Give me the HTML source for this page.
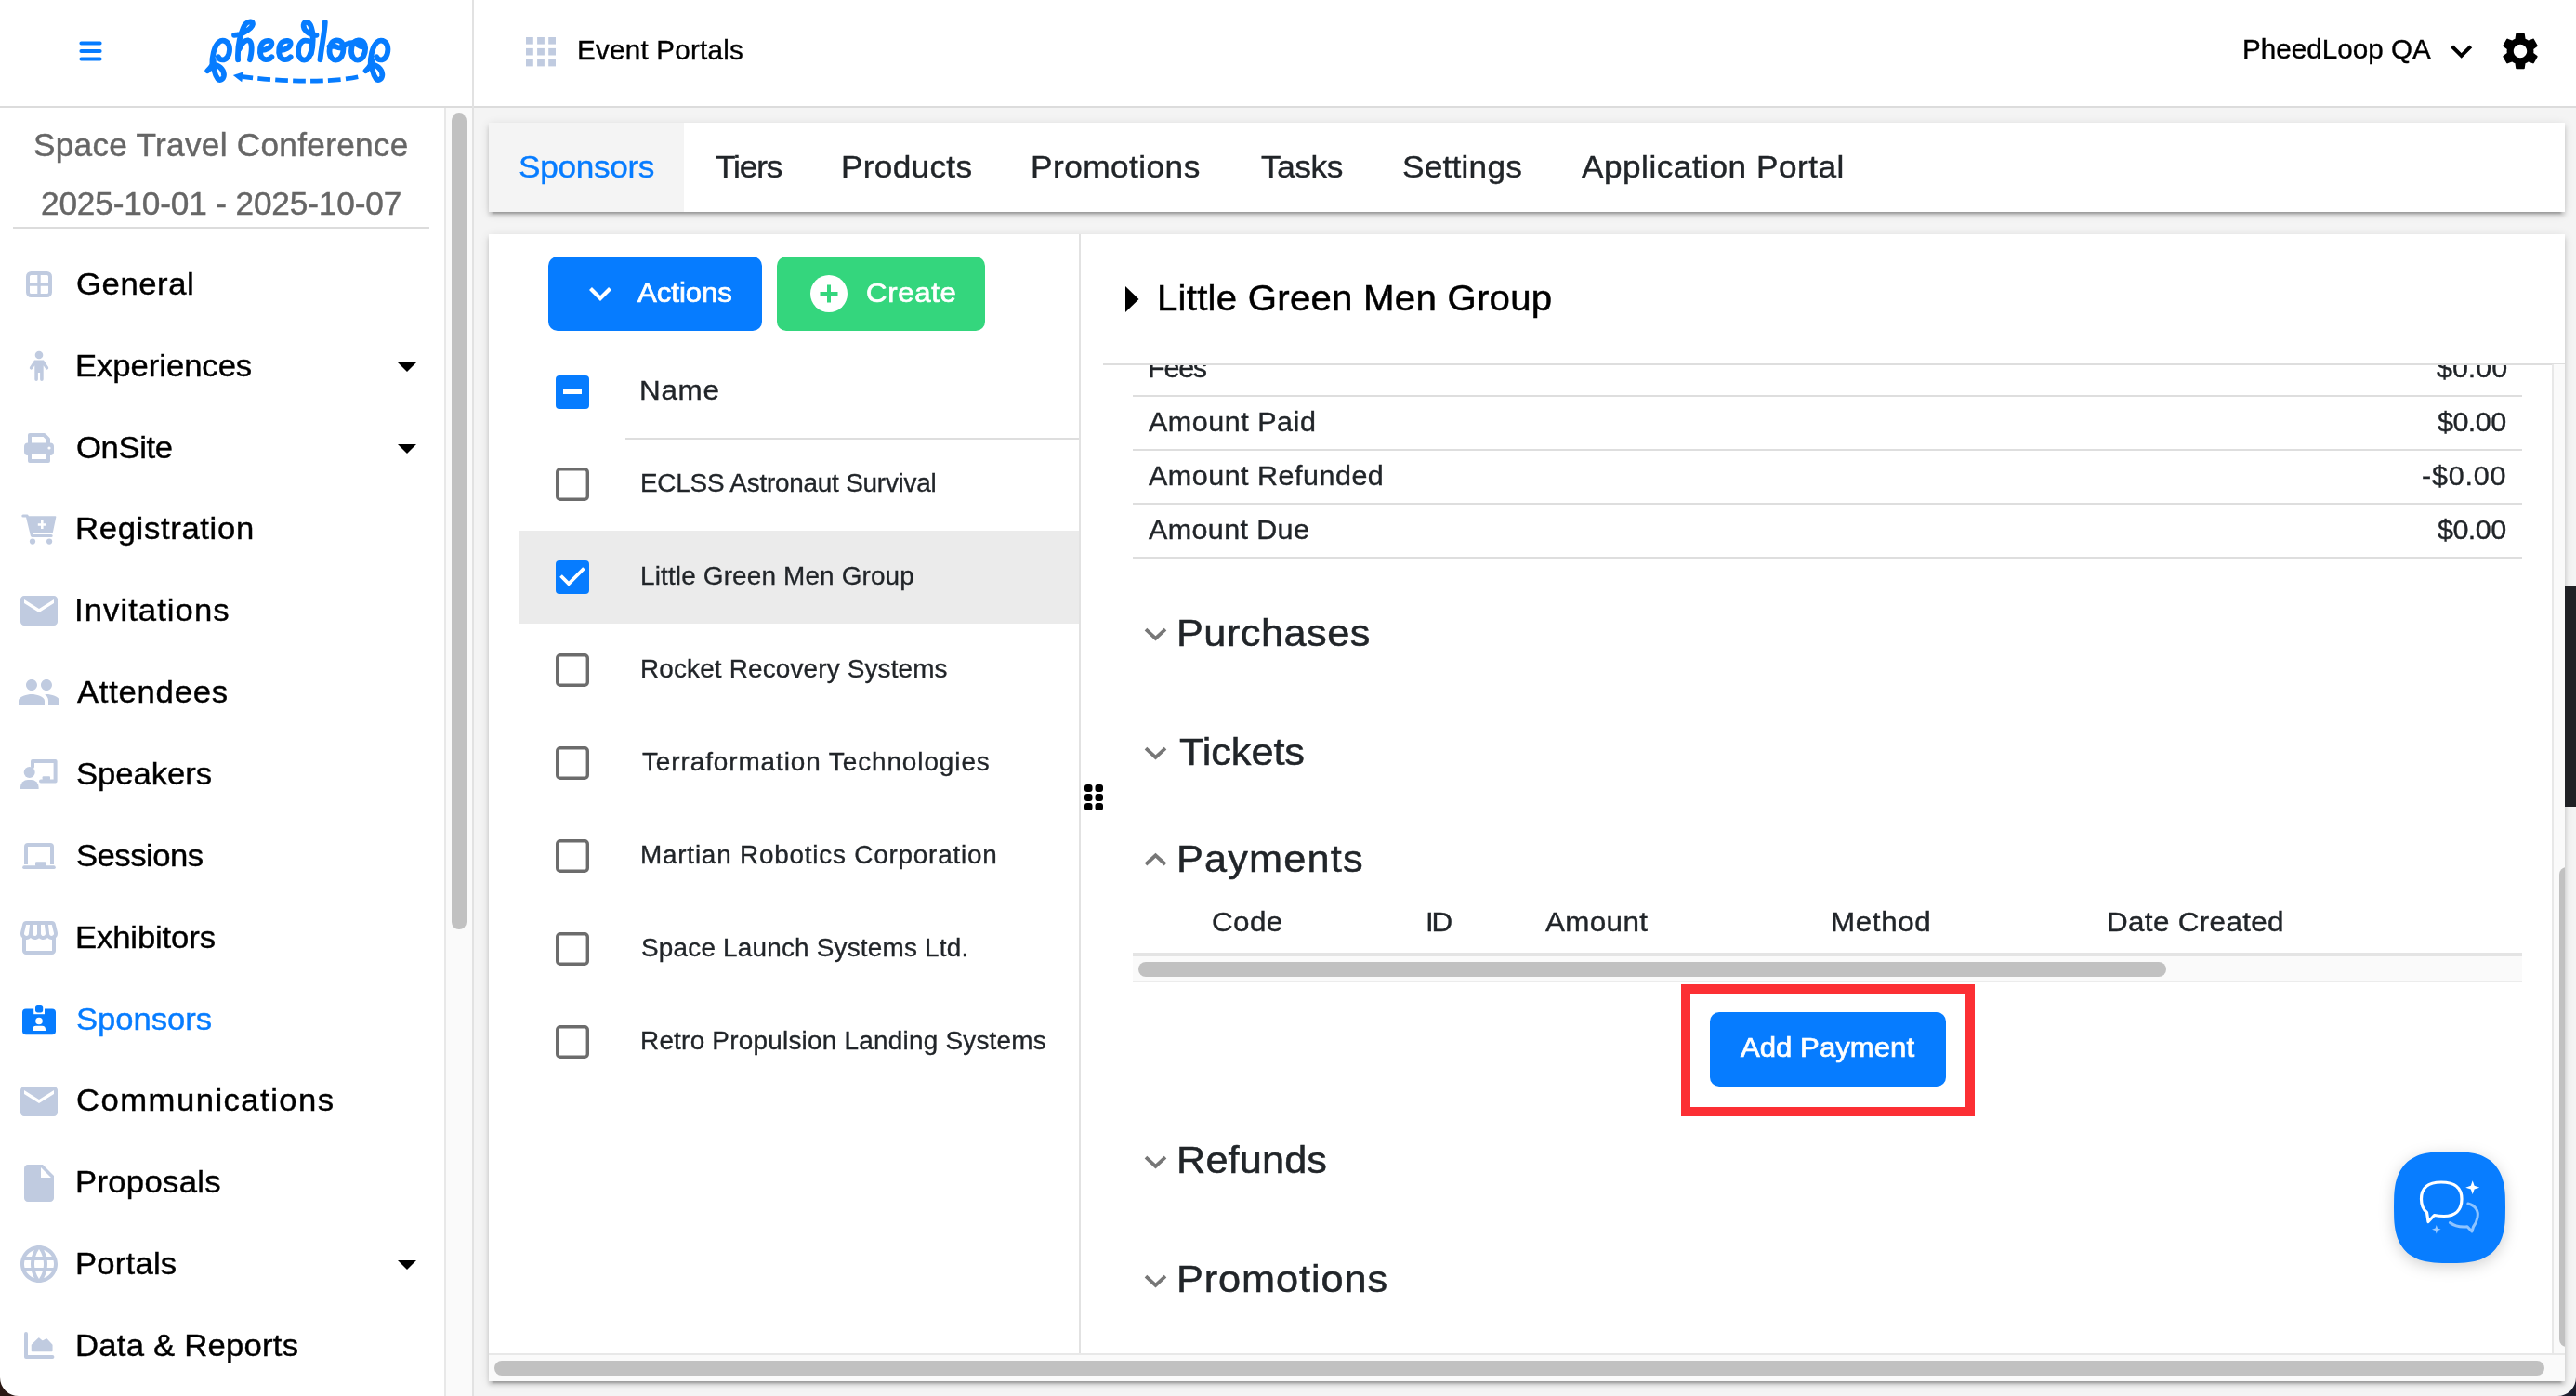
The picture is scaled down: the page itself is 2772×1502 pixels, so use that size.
<!DOCTYPE html>
<html lang="en"><head><meta charset="utf-8"><title>Sponsors</title>
<style>
html,body{margin:0;padding:0}
body{width:2772px;height:1502px;position:relative;overflow:hidden;background:#f4f4f4;font-family:"Liberation Sans",sans-serif;}
.a{position:absolute}
.t{position:absolute;white-space:pre;font-family:"Liberation Sans",sans-serif}
svg{position:absolute;overflow:visible}
</style></head><body>

<div class="a" style="left:0;top:0;width:2772px;height:114px;background:#fff"></div>
<div class="a" style="left:0;top:114px;width:2772px;height:2px;background:#dcdcdc"></div>
<div class="a" style="left:0;top:116px;width:478px;height:1386px;background:#fff"></div>
<div class="a" style="left:478px;top:116px;width:30px;height:1386px;background:#fafafa;border-left:2px solid #e8e8e8;box-sizing:border-box"></div>
<div class="a" style="left:508px;top:0;width:2px;height:1502px;background:#e2e2e2"></div>
<div class="a" style="left:486px;top:122px;width:16px;height:878px;border-radius:8px;background:#c1c1c1"></div>
<div class="a" style="left:14px;top:244px;width:448px;height:2px;background:#dcdcdc"></div>
<div class="a" style="left:526px;top:132px;width:2234px;height:96px;background:#fff;box-shadow:0 6px 2px -4px rgba(0,0,0,.2), 0 4px 4px 0 rgba(0,0,0,.14), 0 2px 10px 0 rgba(0,0,0,.12)"></div>
<div class="a" style="left:526px;top:132px;width:210px;height:96px;background:#f4f4f4"></div>
<div class="a" style="left:526px;top:252px;width:2234px;height:1234px;background:#fff;box-shadow:0 6px 2px -4px rgba(0,0,0,.2), 0 4px 4px 0 rgba(0,0,0,.14), 0 2px 10px 0 rgba(0,0,0,.12)"></div>
<div class="a" style="left:1161px;top:252px;width:2px;height:1205px;background:#e2e2e2"></div>
<div class="a" style="left:558px;top:571px;width:603px;height:100px;background:#ebebeb"></div>
<div class="a" style="left:673px;top:471px;width:488px;height:2px;background:#dedede"></div>
<div class="a" style="left:590px;top:276px;width:230px;height:80px;border-radius:10px;background:#067cff"></div>
<div class="a" style="left:836px;top:276px;width:224px;height:80px;border-radius:10px;background:#34d67d"></div>
<svg style="left:630px;top:304px" width="32" height="24" viewBox="0 0 32 24"><path d="M5.5 6.5 L16 17 L26.5 6.5" fill="none" stroke="#fff" stroke-width="4.2"/></svg>
<svg style="left:872px;top:296px" width="40" height="40" viewBox="0 0 40 40"><circle cx="20" cy="20" r="20" fill="#fff"/><path d="M20 10.5V29.5M10.5 20H29.5" stroke="#34d67d" stroke-width="4" fill="none"/></svg>
<div class="a" style="left:597.5px;top:403.5px;width:36px;height:36px;border-radius:4px;background:#067cff"></div>
<div class="a" style="left:605.5px;top:419px;width:20px;height:5px;background:#fff"></div>
<svg style="left:597.5px;top:503px" width="36" height="36" viewBox="0 0 36 36"><rect x="1.7" y="1.7" width="32.6" height="32.6" rx="3.2" fill="#fff" stroke="#6c6c6c" stroke-width="3.4"/></svg>
<div class="a" style="left:597.5px;top:603px;width:36px;height:36px;border-radius:4px;background:#067cff"></div>
<svg style="left:597.5px;top:601.8px" width="36" height="36" viewBox="0 0 36 36"><path d="M5.5 17.5 L14 26 L30.5 9.5" fill="none" stroke="#fff" stroke-width="3.8"/></svg>
<svg style="left:597.5px;top:703px" width="36" height="36" viewBox="0 0 36 36"><rect x="1.7" y="1.7" width="32.6" height="32.6" rx="3.2" fill="#fff" stroke="#6c6c6c" stroke-width="3.4"/></svg>
<svg style="left:597.5px;top:803px" width="36" height="36" viewBox="0 0 36 36"><rect x="1.7" y="1.7" width="32.6" height="32.6" rx="3.2" fill="#fff" stroke="#6c6c6c" stroke-width="3.4"/></svg>
<svg style="left:597.5px;top:903px" width="36" height="36" viewBox="0 0 36 36"><rect x="1.7" y="1.7" width="32.6" height="32.6" rx="3.2" fill="#fff" stroke="#6c6c6c" stroke-width="3.4"/></svg>
<svg style="left:597.5px;top:1003px" width="36" height="36" viewBox="0 0 36 36"><rect x="1.7" y="1.7" width="32.6" height="32.6" rx="3.2" fill="#fff" stroke="#6c6c6c" stroke-width="3.4"/></svg>
<svg style="left:597.5px;top:1103px" width="36" height="36" viewBox="0 0 36 36"><rect x="1.7" y="1.7" width="32.6" height="32.6" rx="3.2" fill="#fff" stroke="#6c6c6c" stroke-width="3.4"/></svg>
<svg style="left:1211px;top:308px" width="15" height="28" viewBox="0 0 15 28"><path d="M0 0L14.5 14L0 28Z" fill="#000"/></svg>
<div class="a" style="left:1163px;top:392px;width:1584px;height:240px;overflow:hidden">
<span class="t" style="left:71.55px;top:-9.81px;font-size:28.84px;line-height:28.84px;color:#212529;letter-spacing:-1.153px;transform:scaleX(1.0573);transform-origin:0 0;-webkit-text-stroke:0.35px #212529;">Fees</span>
<span class="t" style="left:1458.85px;top:-9.81px;font-size:28.84px;line-height:28.84px;color:#212529;letter-spacing:-0.043px;transform:scaleX(1.0573);transform-origin:0 0;-webkit-text-stroke:0.35px #212529;">$0.00</span>
<span class="t" style="left:73.05px;top:48.19px;font-size:28.84px;line-height:28.84px;color:#212529;letter-spacing:0.505px;transform:scaleX(1.0573);transform-origin:0 0;-webkit-text-stroke:0.35px #212529;">Amount Paid</span>
<span class="t" style="left:1459.85px;top:48.19px;font-size:28.84px;line-height:28.84px;color:#212529;letter-spacing:-0.516px;transform:scaleX(1.0573);transform-origin:0 0;-webkit-text-stroke:0.35px #212529;">$0.00</span>
<span class="t" style="left:73.05px;top:106.19px;font-size:28.84px;line-height:28.84px;color:#212529;letter-spacing:0.481px;transform:scaleX(1.0573);transform-origin:0 0;-webkit-text-stroke:0.35px #212529;">Amount Refunded</span>
<span class="t" style="left:1443.45px;top:106.19px;font-size:28.84px;line-height:28.84px;color:#212529;letter-spacing:0.768px;transform:scaleX(1.0573);transform-origin:0 0;-webkit-text-stroke:0.35px #212529;">-$0.00</span>
<span class="t" style="left:73.05px;top:164.19px;font-size:28.84px;line-height:28.84px;color:#212529;letter-spacing:0.362px;transform:scaleX(1.0573);transform-origin:0 0;-webkit-text-stroke:0.35px #212529;">Amount Due</span>
<span class="t" style="left:1459.85px;top:164.19px;font-size:28.84px;line-height:28.84px;color:#212529;letter-spacing:-0.516px;transform:scaleX(1.0573);transform-origin:0 0;-webkit-text-stroke:0.35px #212529;">$0.00</span>
<div class="a" style="left:56px;top:33px;width:1495px;height:2px;background:#dedede"></div>
<div class="a" style="left:56px;top:91px;width:1495px;height:2px;background:#dedede"></div>
<div class="a" style="left:56px;top:149px;width:1495px;height:2px;background:#dedede"></div>
<div class="a" style="left:56px;top:207px;width:1495px;height:2px;background:#dedede"></div>
</div>
<div class="a" style="left:1187px;top:391px;width:1573px;height:2px;background:#dedede"></div>
<div class="a" style="left:2746px;top:392px;width:14px;height:1065px;background:#fafafa;border-left:2px solid #e8e8e8;box-sizing:border-box"></div>
<div class="a" style="left:2754px;top:933px;width:16px;height:516px;border-radius:8px;background:#c1c1c1;clip-path:inset(0 10px 0 0)"></div>
<svg style="left:1231.7px;top:675px" width="23" height="14" viewBox="0 0 23 14"><path d="M1 2.2 L11.5 11.9 L22 2.2" fill="none" stroke="#777" stroke-width="3.8"/></svg>
<svg style="left:1231.7px;top:803px" width="23" height="14" viewBox="0 0 23 14"><path d="M1 2.2 L11.5 11.9 L22 2.2" fill="none" stroke="#777" stroke-width="3.8"/></svg>
<svg style="left:1231.7px;top:917.5px" width="23" height="14" viewBox="0 0 23 14"><path d="M1 12 L11.5 2.3 L22 12" fill="none" stroke="#777" stroke-width="3.8"/></svg>
<svg style="left:1231.7px;top:1242.5px" width="23" height="14" viewBox="0 0 23 14"><path d="M1 2.2 L11.5 11.9 L22 2.2" fill="none" stroke="#777" stroke-width="3.8"/></svg>
<svg style="left:1231.7px;top:1370.5px" width="23" height="14" viewBox="0 0 23 14"><path d="M1 2.2 L11.5 11.9 L22 2.2" fill="none" stroke="#777" stroke-width="3.8"/></svg>
<div class="a" style="left:1219px;top:1025px;width:1495px;height:4px;background:#e4e4e4"></div>
<div class="a" style="left:1219px;top:1029px;width:1495px;height:28px;background:#fafafa;border-bottom:2px solid #ececec;box-sizing:border-box"></div>
<div class="a" style="left:1225px;top:1035px;width:1106px;height:16px;border-radius:8px;background:#c1c1c1"></div>
<div class="a" style="left:1809px;top:1059px;width:316px;height:142px;border:10px solid #fc2f34;box-sizing:border-box"></div>
<div class="a" style="left:1840px;top:1088.5px;width:253.5px;height:80px;border-radius:10px;background:#067cff"></div>
<svg style="left:1167px;top:844px" width="21" height="28" viewBox="0 0 21 28" fill="#000"><rect x="0.0" y="0" width="8.5" height="8" rx="3"/><rect x="11.5" y="0" width="8.5" height="8" rx="3"/><rect x="0.0" y="10" width="8.5" height="8" rx="3"/><rect x="11.5" y="10" width="8.5" height="8" rx="3"/><rect x="0.0" y="20" width="8.5" height="8" rx="3"/><rect x="11.5" y="20" width="8.5" height="8" rx="3"/></svg>
<div class="a" style="left:526px;top:1456px;width:2234px;height:30px;background:#fafafa;border-top:2px solid #e8e8e8;box-sizing:border-box"></div>
<div class="a" style="left:532px;top:1464px;width:2206px;height:16px;border-radius:8px;background:#c1c1c1"></div>
<div class="a" style="left:2760px;top:631px;width:12px;height:237px;background:#202125"></div>
<svg style="left:2576px;top:1238.5px;filter:drop-shadow(0 4px 8px rgba(0,0,0,.18))" width="120" height="120" viewBox="0 0 120 120"><path d="M120.0,60.0 L119.9,67.8 L119.8,72.6 L119.5,76.7 L119.1,80.3 L118.6,83.6 L118.0,86.7 L117.2,89.6 L116.4,92.3 L115.4,94.8 L114.3,97.2 L113.1,99.5 L111.8,101.6 L110.4,103.6 L108.9,105.5 L107.2,107.2 L105.5,108.9 L103.6,110.4 L101.6,111.8 L99.5,113.1 L97.2,114.3 L94.8,115.4 L92.3,116.4 L89.6,117.2 L86.7,118.0 L83.6,118.6 L80.3,119.1 L76.7,119.5 L72.6,119.8 L67.8,119.9 L60.0,120.0 L52.2,119.9 L47.4,119.8 L43.3,119.5 L39.7,119.1 L36.4,118.6 L33.3,118.0 L30.4,117.2 L27.7,116.4 L25.2,115.4 L22.8,114.3 L20.5,113.1 L18.4,111.8 L16.4,110.4 L14.5,108.9 L12.8,107.2 L11.1,105.5 L9.6,103.6 L8.2,101.6 L6.9,99.5 L5.7,97.2 L4.6,94.8 L3.6,92.3 L2.8,89.6 L2.0,86.7 L1.4,83.6 L0.9,80.3 L0.5,76.7 L0.2,72.6 L0.1,67.8 L0.0,60.0 L0.1,52.2 L0.2,47.4 L0.5,43.3 L0.9,39.7 L1.4,36.4 L2.0,33.3 L2.8,30.4 L3.6,27.7 L4.6,25.2 L5.7,22.8 L6.9,20.5 L8.2,18.4 L9.6,16.4 L11.1,14.5 L12.8,12.8 L14.5,11.1 L16.4,9.6 L18.4,8.2 L20.5,6.9 L22.8,5.7 L25.2,4.6 L27.7,3.6 L30.4,2.8 L33.3,2.0 L36.4,1.4 L39.7,0.9 L43.3,0.5 L47.4,0.2 L52.2,0.1 L60.0,0.0 L67.8,0.1 L72.6,0.2 L76.7,0.5 L80.3,0.9 L83.6,1.4 L86.7,2.0 L89.6,2.8 L92.3,3.6 L94.8,4.6 L97.2,5.7 L99.5,6.9 L101.6,8.2 L103.6,9.6 L105.5,11.1 L107.2,12.8 L108.9,14.5 L110.4,16.4 L111.8,18.4 L113.1,20.5 L114.3,22.8 L115.4,25.2 L116.4,27.7 L117.2,30.4 L118.0,33.3 L118.6,36.4 L119.1,39.7 L119.5,43.3 L119.8,47.4 L119.9,52.2Z" fill="#087dff"/><path d="M51,33 C66,33 73,39 73,51 C73,63 66,69.5 54,69.5 C49,69.5 46,69 43.5,68.5 L37,75.5 L35.5,65.5 C31,62 29.5,57 29.5,51 C29.5,39 37,33 51,33 Z" fill="none" stroke="#fff" stroke-width="3.2" stroke-linejoin="round"/><path d="M79.8,56 C88,58 91.5,64 90,71 C89,76 87,79 85.5,81 L84,86 L79,80.8 C72,81.5 65,80 60.4,76.5" fill="none" stroke="#fff" stroke-opacity=".55" stroke-width="3" stroke-linecap="round" stroke-linejoin="round"/><path d="M84.7,31.3 L86.6,36.8 L92.2,38.7 L86.6,40.6 L84.7,46.1 L82.8,40.6 L77.2,38.7 L82.8,36.8 Z" fill="#fff"/><path d="M45.8,79 L47,82.6 L50.6,83.8 L47,85 L45.8,88.6 L44.6,85 L41,83.8 L44.6,82.6 Z" fill="#fff" fill-opacity=".6"/></svg>
<svg style="left:85px;top:44px" width="26" height="24" viewBox="0 0 26 24"><path d="M2.4 2.4H22.6M2.4 10.9H22.6M2.4 19.6H22.6" stroke="#067cff" stroke-width="4" stroke-linecap="round" fill="none"/></svg>
<svg style="left:566px;top:39.5px" width="33" height="32" viewBox="0 0 33 32" fill="#c0cbe0"><rect x="0.0" y="0.0" width="7.8" height="7.6"/><rect x="12.1" y="0.0" width="7.8" height="7.6"/><rect x="24.2" y="0.0" width="7.8" height="7.6"/><rect x="0.0" y="11.9" width="7.8" height="7.6"/><rect x="12.1" y="11.9" width="7.8" height="7.6"/><rect x="24.2" y="11.9" width="7.8" height="7.6"/><rect x="0.0" y="23.8" width="7.8" height="7.6"/><rect x="12.1" y="23.8" width="7.8" height="7.6"/><rect x="24.2" y="23.8" width="7.8" height="7.6"/></svg>
<svg style="left:2636.5px;top:48px" width="24" height="16" viewBox="0 0 24 16"><path d="M1.6 1.8 L11.7 12 L21.8 1.8" stroke="#000" stroke-width="4" fill="none"/></svg>
<svg style="left:2688px;top:31px" width="48" height="48" viewBox="0 0 24 24"><path d="M19.14,12.94c0.04-0.3,0.06-0.61,0.06-0.94c0-0.32-0.02-0.64-0.07-0.94l2.03-1.58c0.18-0.14,0.23-0.41,0.12-0.61 l-1.92-3.32c-0.12-0.22-0.37-0.29-0.59-0.22l-2.39,0.96c-0.5-0.38-1.03-0.7-1.62-0.94L14.4,2.81c-0.04-0.24-0.24-0.41-0.48-0.41 h-3.84c-0.24,0-0.43,0.17-0.47,0.41L9.25,5.35C8.66,5.59,8.12,5.92,7.63,6.29L5.24,5.33c-0.22-0.08-0.47,0-0.59,0.22L2.74,8.87 C2.62,9.08,2.66,9.34,2.86,9.48l2.03,1.58C4.84,11.36,4.8,11.69,4.8,12s0.02,0.64,0.07,0.94l-2.03,1.58 c-0.18,0.14-0.23,0.41-0.12,0.61l1.92,3.32c0.12,0.22,0.37,0.29,0.59,0.22l2.39-0.96c0.5,0.38,1.03,0.7,1.62,0.94l0.36,2.54 c0.05,0.24,0.24,0.41,0.48,0.41h3.84c0.24,0,0.44-0.17,0.47-0.41l0.36-2.54c0.59-0.24,1.13-0.56,1.62-0.94l2.39,0.96 c0.22,0.08,0.47,0,0.59-0.22l1.92-3.32c0.12-0.22,0.07-0.47-0.12-0.61L19.14,12.94z M12,15.6c-1.98,0-3.6-1.62-3.6-3.6 s1.62-3.6,3.6-3.6s3.6,1.62,3.6,3.6S13.98,15.6,12,15.6z" fill="#000"/></svg>
<svg style="left:210px;top:10px" width="220" height="90" viewBox="0 0 2576 1054"><g fill="none" stroke="#067cff" stroke-width="68" stroke-linecap="round" stroke-linejoin="round"><path d="M155,775 C180,755 200,730 215,700 C212,600 235,470 300,412 C340,378 400,392 425,452 C450,522 420,622 360,636 C330,642 305,628 292,600 M232,640 C222,720 245,822 285,876 C310,906 352,886 361,840 C370,780 322,716 250,700"/><path d="M492,326 C540,322 580,312 600,300 C660,270 720,230 725,190 C728,150 680,145 640,180 C600,215 580,300 560,380 C540,470 535,560 540,635 M558,500 C580,430 630,385 670,392 C710,400 718,470 705,560 L690,635"/><path d="M832,515 C900,512 962,482 965,432 C966,392 902,384 862,414 C820,448 805,530 830,590 C852,642 920,650 965,600"/><path d="M832,515 C900,512 962,482 965,432 C966,392 902,384 862,414 C820,448 805,530 830,590 C852,642 920,650 965,600" transform="translate(237,0)"/><path d="M1385,393 C1330,393 1295,470 1300,540 C1305,610 1340,645 1385,638 C1430,630 1462,560 1470,470 C1478,400 1440,393 1385,393 M1462,560 C1485,470 1500,300 1452,200 C1428,152 1372,150 1366,200 C1360,262 1430,318 1528,326"/><path d="M1637,162 C1630,300 1590,480 1575,635"/><path d="M1780,390 C1720,392 1690,460 1692,530 C1695,610 1740,645 1785,638 C1840,628 1868,560 1868,490 C1868,430 1840,388 1780,390 M1692,470 C1760,440 1800,500 1830,480 C1880,450 1930,420 1990,425"/><path d="M2055,390 C1995,392 1965,460 1967,530 C1970,610 2015,645 2060,638 C2115,628 2145,560 2145,490 C2145,430 2115,388 2055,390 M1990,425 C2040,420 2080,490 2120,470"/><path d="M155,775 C180,755 200,730 215,700 C212,600 235,470 300,412 C340,378 400,392 425,452 C450,522 420,622 360,636 C330,642 305,628 292,600 M232,640 C222,720 245,822 285,876 C310,906 352,886 361,840 C370,780 322,716 250,700" transform="translate(1995,0)"/></g><path d="M2052,852 C1800,905 1300,935 600,850" fill="none" stroke="#067cff" stroke-width="56" stroke-dasharray="160 62"/><path d="M478,832 L612,788 L588,916 Z" fill="#067cff"/></svg>
<svg style="left:12px;top:276.0px" width="60" height="60" viewBox="-30 -30 60 60"><rect x="-12" y="-12" width="24" height="24" rx="3.5" fill="none" stroke="#c0cbe0" stroke-width="4"/><path d="M0 -12V12M-12 0H12" stroke="#c0cbe0" stroke-width="3.4" fill="none"/></svg>
<svg style="left:12px;top:363.9px" width="60" height="60" viewBox="-30 -30 60 60"><circle cx="0" cy="-12" r="4.3" fill="#c0cbe0"/><path d="M-5,-6.5 h10 l5,7.6 a1.7,1.7 0 0 1 -2.8,1.9 l-2.5,-3.8 v15 a1.8,1.8 0 0 1 -3.6,0 v-7.2 h-2.2 v7.2 a1.8,1.8 0 0 1 -3.6,0 v-15 l-2.5,3.8 a1.7,1.7 0 0 1 -2.8,-1.9 z" fill="#c0cbe0"/></svg>
<svg style="left:12px;top:451.7px" width="60" height="60" viewBox="-30 -30 60 60"><path d="M-10,-4 V-14 H5.5 L10,-9.5 V-4" fill="none" stroke="#c0cbe0" stroke-width="4" stroke-linejoin="round"/><rect x="-16" y="-5.5" width="32" height="13.5" rx="4" fill="#c0cbe0"/><rect x="-10" y="5" width="20" height="9" fill="#fff" stroke="#c0cbe0" stroke-width="4" stroke-linejoin="round"/><circle cx="11" cy="0" r="1.6" fill="#fff"/></svg>
<svg style="left:12px;top:539.6px" width="60" height="60" viewBox="-30 -30 60 60"><path d="M-12.6,-14 H17.6 L14.2,2.4 H-8.6 Z" fill="#c0cbe0" stroke="#c0cbe0" stroke-width="1.5" stroke-linejoin="round"/><path d="M-17.2,-15 H-12.8 L-7.6,6.4 H13.2" fill="none" stroke="#c0cbe0" stroke-width="3" stroke-linecap="round" stroke-linejoin="round"/><path d="M3.3,-10 V-1 M-1.2,-5.5 H7.8" stroke="#fff" stroke-width="2.6" fill="none"/><circle cx="-7" cy="12.6" r="3.1" fill="#c0cbe0"/><circle cx="11.1" cy="12.6" r="3.1" fill="#c0cbe0"/></svg>
<svg style="left:18px;top:633.4px" width="48" height="48" viewBox="0 0 24 24"><path d="M20 4H4c-1.1 0-1.99.9-1.99 2L2 18c0 1.1.9 2 2 2h16c1.1 0 2-.9 2-2V6c0-1.1-.9-2-2-2zm0 4l-8 5-8-5V6l8 5 8-5v2z" fill="#c0cbe0"/></svg>
<svg style="left:18px;top:721.3px" width="48" height="48" viewBox="0 0 24 24"><path d="M16 11c1.66 0 2.99-1.34 2.99-3S17.66 5 16 5c-1.66 0-3 1.34-3 3s1.34 3 3 3zm-8 0c1.66 0 2.99-1.34 2.99-3S9.66 5 8 5C6.34 5 5 6.34 5 8s1.34 3 3 3zm0 2c-2.33 0-7 1.17-7 3.5V19h14v-2.5c0-2.33-4.67-3.5-7-3.5zm8 0c-.29 0-.62.02-.97.05 1.16.84 1.97 1.97 1.97 3.45V19h6v-2.5c0-2.33-4.67-3.5-7-3.5z" fill="#c0cbe0"/></svg>
<svg style="left:12px;top:803.2px" width="60" height="60" viewBox="-30 -30 60 60"><path d="M-7,-8 V-14 H17.6 V7.4 H2" fill="none" stroke="#c0cbe0" stroke-width="4" stroke-linejoin="round" stroke-linecap="round"/><rect x="3.6" y="2.2" width="8.4" height="4" rx="1" fill="#c0cbe0"/><circle cx="-10.3" cy="-2.1" r="6" fill="#c0cbe0"/><path d="M-20,16 V14 a8,8 0 0 1 8,-8 h3.6 a8,8 0 0 1 8,8 V16 Z" fill="#c0cbe0"/></svg>
<svg style="left:12px;top:891.0px" width="60" height="60" viewBox="-30 -30 60 60"><path d="M-14,9 V-10 a2,2 0 0 1 2,-2 H12 a2,2 0 0 1 2,2 V9" fill="none" stroke="#c0cbe0" stroke-width="4"/><rect x="-17.8" y="10.3" width="35.6" height="3.8" rx="1.9" fill="#c0cbe0"/><rect x="-4" y="6.2" width="11.5" height="5" rx="1.2" fill="#c0cbe0"/></svg>
<svg style="left:18px;top:984.9px" width="48" height="48" viewBox="0 0 24 24"><path d="M21.9 8.89l-1.05-4.37c-.22-.9-1-1.52-1.91-1.52H5.05c-.9 0-1.69.63-1.9 1.52L2.1 8.89c-.24 1.02-.02 2.06.62 2.88.08.11.19.19.28.29V19c0 1.1.9 2 2 2h14c1.1 0 2-.9 2-2v-6.94c.09-.09.2-.18.28-.28.64-.82.87-1.87.62-2.89zm-2.99-3.9l1.05 4.37c.1.42.01.84-.25 1.17-.14.18-.44.47-.94.47-.61 0-1.14-.49-1.21-1.14L16.98 5l1.93-.01zM13 5h1.96l.54 4.52c.05.39-.07.78-.33 1.07-.22.26-.54.41-.95.41-.67 0-1.22-.59-1.22-1.31V5zM8.49 9.52L9.04 5H11v4.69c0 .72-.55 1.31-1.29 1.31-.34 0-.65-.15-.89-.41-.25-.29-.37-.68-.33-1.07zm-4.45-.16L5.05 5h1.97l-.58 4.86c-.08.65-.6 1.14-1.21 1.14-.49 0-.8-.29-.93-.47-.27-.32-.36-.75-.26-1.17zM5 19v-6.03c.08.01.15.03.23.03.87 0 1.66-.36 2.24-.95.6.6 1.4.95 2.31.95.87 0 1.65-.36 2.23-.93.59.57 1.39.93 2.29.93.84 0 1.64-.35 2.24-.95.58.59 1.37.95 2.24.95.08 0 .15-.02.23-.03V19H5z" fill="#c0cbe0"/></svg>
<svg style="left:12px;top:1066.7px" width="60" height="60" viewBox="-30 -30 60 60"><rect x="-18" y="-11.6" width="36" height="27.8" rx="4" fill="#067cff"/><rect x="-5.8" y="-12.6" width="11.8" height="6.8" fill="#fff"/><rect x="-4" y="-16" width="8.2" height="8.4" rx="2.6" fill="#067cff"/><circle cx="0" cy="1.5" r="3.8" fill="#fff"/><path d="M-7,12 V10.6 a3.8,3.8 0 0 1 3.8,-3.8 h6.4 a3.8,3.8 0 0 1 3.8,3.8 V12 Z" fill="#fff"/></svg>
<svg style="left:18px;top:1160.6px" width="48" height="48" viewBox="0 0 24 24"><path d="M20 4H4c-1.1 0-1.99.9-1.99 2L2 18c0 1.1.9 2 2 2h16c1.1 0 2-.9 2-2V6c0-1.1-.9-2-2-2zm0 4l-8 5-8-5V6l8 5 8-5v2z" fill="#c0cbe0"/></svg>
<svg style="left:18px;top:1248.5px" width="48" height="48" viewBox="0 0 24 24"><path d="M6 2c-1.1 0-1.99.9-1.99 2L4 20c0 1.1.89 2 1.99 2H18c1.1 0 2-.9 2-2V8l-6-6H6zm7 7V3.5L18.5 9H13z" fill="#c0cbe0"/></svg>
<svg style="left:18px;top:1336.3px" width="48" height="48" viewBox="0 0 24 24"><path d="M11.99 2C6.47 2 2 6.48 2 12s4.47 10 9.99 10C17.52 22 22 17.52 22 12S17.52 2 11.99 2zm6.93 6h-2.95c-.32-1.25-.78-2.45-1.38-3.56 1.84.63 3.37 1.91 4.33 3.56zM12 4.04c.83 1.2 1.48 2.53 1.91 3.96h-3.82c.43-1.43 1.08-2.76 1.91-3.96zM4.26 14C4.1 13.36 4 12.69 4 12s.1-1.36.26-2h3.38c-.08.66-.14 1.32-.14 2 0 .68.06 1.34.14 2H4.26zm.82 2h2.95c.32 1.25.78 2.45 1.38 3.56-1.84-.63-3.37-1.9-4.33-3.56zm2.95-8H5.08c.96-1.66 2.49-2.93 4.33-3.56C8.81 5.55 8.35 6.75 8.03 8zM12 19.96c-.83-1.2-1.48-2.53-1.91-3.96h3.82c-.43 1.43-1.08 2.76-1.91 3.96zM14.34 14H9.66c-.09-.66-.16-1.32-.16-2 0-.68.07-1.35.16-2h4.68c.09.65.16 1.32.16 2 0 .68-.07 1.34-.16 2zm.25 5.56c.6-1.11 1.06-2.31 1.38-3.56h2.95c-.96 1.65-2.49 2.93-4.33 3.56zM16.36 14c.08-.66.14-1.32.14-2 0-.68-.06-1.34-.14-2h3.38c.16.64.26 1.31.26 2s-.1 1.36-.26 2h-3.38z" fill="#c0cbe0"/></svg>
<svg style="left:12px;top:1418.2px" width="60" height="60" viewBox="-30 -30 60 60"><path d="M-14,-13 V12 H14.4" fill="none" stroke="#c0cbe0" stroke-width="4" stroke-linecap="round" stroke-linejoin="round"/><path d="M-7.5,5.5 V-1 L-0.2,-8 L3.5,-4.7 L8.2,-7 L13.8,-1 V5.5 Z" fill="#c0cbe0" stroke="#c0cbe0" stroke-width="1.5" stroke-linejoin="round"/></svg>
<svg style="left:428px;top:389.7px" width="20" height="10" viewBox="0 0 20 10"><path d="M0 0H20L10 10Z" fill="#000"/></svg>
<svg style="left:428px;top:477.5px" width="20" height="10" viewBox="0 0 20 10"><path d="M0 0H20L10 10Z" fill="#000"/></svg>
<svg style="left:428px;top:1356.1px" width="20" height="10" viewBox="0 0 20 10"><path d="M0 0H20L10 10Z" fill="#000"/></svg>
<svg style="left:0;top:1482px" width="20" height="20" viewBox="0 0 20 20"><path d="M0 0V20H20A20 20 0 0 1 0 0Z" fill="#2a1814"/></svg>
<svg style="left:2752px;top:1482px" width="20" height="20" viewBox="0 0 20 20"><path d="M20 0V20H0A20 20 0 0 0 20 0Z" fill="#1c1e2e"/></svg>
<header id="topbar" class="a" style="left:0;top:0;width:0;height:0">
<span class="t" style="left:620.85px;top:39.69px;font-size:28.84px;line-height:28.84px;color:#000;letter-spacing:0.214px;transform:scaleX(1.0274);transform-origin:0 0;-webkit-text-stroke:0.35px #000;">Event Portals</span>
<span class="t" style="left:2413.35px;top:38.89px;font-size:28.84px;line-height:28.84px;color:#000;letter-spacing:0.019px;transform:scaleX(1.0274);transform-origin:0 0;-webkit-text-stroke:0.35px #000;">PheedLoop QA</span>
</header>
<nav id="sidebar" class="a" style="left:0;top:0;width:0;height:0">
<span class="t" style="left:35.61px;top:138.91px;font-size:34.81px;line-height:34.81px;color:#666;letter-spacing:0.263px;transform:scaleX(1.0122);transform-origin:0 0;-webkit-text-stroke:0.42px #666;">Space Travel Conference</span>
<span class="t" style="left:43.61px;top:202.41px;font-size:34.81px;line-height:34.81px;color:#666;letter-spacing:-0.150px;transform:scaleX(1.0122);transform-origin:0 0;-webkit-text-stroke:0.42px #666;">2025-10-01 - 2025-10-07</span>
<span class="t" style="left:82.08px;top:289.78px;font-size:32.96px;line-height:32.96px;color:#000;letter-spacing:0.547px;transform:scaleX(1.0522);transform-origin:0 0;-webkit-text-stroke:0.40px #000;">General</span>
<span class="t" style="left:81.08px;top:377.64px;font-size:32.96px;line-height:32.96px;color:#000;letter-spacing:-0.058px;transform:scaleX(1.0522);transform-origin:0 0;-webkit-text-stroke:0.40px #000;">Experiences</span>
<span class="t" style="left:82.08px;top:465.50px;font-size:32.96px;line-height:32.96px;color:#000;letter-spacing:-0.379px;transform:scaleX(1.0522);transform-origin:0 0;-webkit-text-stroke:0.40px #000;">OnSite</span>
<span class="t" style="left:81.08px;top:553.36px;font-size:32.96px;line-height:32.96px;color:#000;letter-spacing:0.620px;transform:scaleX(1.0522);transform-origin:0 0;-webkit-text-stroke:0.40px #000;">Registration</span>
<span class="t" style="left:80.08px;top:641.22px;font-size:32.96px;line-height:32.96px;color:#000;letter-spacing:0.996px;transform:scaleX(1.0522);transform-origin:0 0;-webkit-text-stroke:0.40px #000;">Invitations</span>
<span class="t" style="left:83.08px;top:729.08px;font-size:32.96px;line-height:32.96px;color:#000;letter-spacing:0.695px;transform:scaleX(1.0522);transform-origin:0 0;-webkit-text-stroke:0.40px #000;">Attendees</span>
<span class="t" style="left:82.08px;top:816.94px;font-size:32.96px;line-height:32.96px;color:#000;letter-spacing:-0.038px;transform:scaleX(1.0522);transform-origin:0 0;-webkit-text-stroke:0.40px #000;">Speakers</span>
<span class="t" style="left:82.08px;top:904.80px;font-size:32.96px;line-height:32.96px;color:#000;letter-spacing:-0.501px;transform:scaleX(1.0522);transform-origin:0 0;-webkit-text-stroke:0.40px #000;">Sessions</span>
<span class="t" style="left:81.08px;top:992.66px;font-size:32.96px;line-height:32.96px;color:#000;letter-spacing:-0.131px;transform:scaleX(1.0522);transform-origin:0 0;-webkit-text-stroke:0.40px #000;">Exhibitors</span>
<span class="t" style="left:82.08px;top:1080.52px;font-size:32.96px;line-height:32.96px;color:#067cff;letter-spacing:-0.038px;transform:scaleX(1.0522);transform-origin:0 0;-webkit-text-stroke:0.40px #067cff;">Sponsors</span>
<span class="t" style="left:82.08px;top:1168.38px;font-size:32.96px;line-height:32.96px;color:#000;letter-spacing:1.386px;transform:scaleX(1.0522);transform-origin:0 0;-webkit-text-stroke:0.40px #000;">Communications</span>
<span class="t" style="left:81.08px;top:1256.24px;font-size:32.96px;line-height:32.96px;color:#000;letter-spacing:0.287px;transform:scaleX(1.0522);transform-origin:0 0;-webkit-text-stroke:0.40px #000;">Proposals</span>
<span class="t" style="left:81.08px;top:1344.10px;font-size:32.96px;line-height:32.96px;color:#000;letter-spacing:0.205px;transform:scaleX(1.0522);transform-origin:0 0;-webkit-text-stroke:0.40px #000;">Portals</span>
<span class="t" style="left:81.08px;top:1431.96px;font-size:32.96px;line-height:32.96px;color:#000;letter-spacing:0.215px;transform:scaleX(1.0522);transform-origin:0 0;-webkit-text-stroke:0.40px #000;">Data &amp; Reports</span>
</nav>
<nav id="tabs" class="a" style="left:0;top:0;width:0;height:0">
<span class="t" style="left:557.68px;top:163.98px;font-size:32.96px;line-height:32.96px;color:#067cff;letter-spacing:-0.298px;transform:scaleX(1.0679);transform-origin:0 0;-webkit-text-stroke:0.40px #067cff;">Sponsors</span>
<span class="t" style="left:769.68px;top:163.98px;font-size:32.96px;line-height:32.96px;color:#212529;letter-spacing:-1.040px;transform:scaleX(1.0679);transform-origin:0 0;-webkit-text-stroke:0.40px #212529;">Tiers</span>
<span class="t" style="left:904.88px;top:163.98px;font-size:32.96px;line-height:32.96px;color:#212529;letter-spacing:0.290px;transform:scaleX(1.0679);transform-origin:0 0;-webkit-text-stroke:0.40px #212529;">Products</span>
<span class="t" style="left:1109.48px;top:163.98px;font-size:32.96px;line-height:32.96px;color:#212529;letter-spacing:0.442px;transform:scaleX(1.0679);transform-origin:0 0;-webkit-text-stroke:0.40px #212529;">Promotions</span>
<span class="t" style="left:1357.08px;top:163.98px;font-size:32.96px;line-height:32.96px;color:#212529;letter-spacing:-0.399px;transform:scaleX(1.0679);transform-origin:0 0;-webkit-text-stroke:0.40px #212529;">Tasks</span>
<span class="t" style="left:1509.08px;top:163.98px;font-size:32.96px;line-height:32.96px;color:#212529;letter-spacing:0.226px;transform:scaleX(1.0679);transform-origin:0 0;-webkit-text-stroke:0.40px #212529;">Settings</span>
<span class="t" style="left:1702.48px;top:163.98px;font-size:32.96px;line-height:32.96px;color:#212529;letter-spacing:0.471px;transform:scaleX(1.0679);transform-origin:0 0;-webkit-text-stroke:0.40px #212529;">Application Portal</span>
</nav>
<section id="sponsor-list" class="a" style="left:0;top:0;width:0;height:0">
<span class="t" style="left:686.25px;top:300.69px;font-size:28.84px;line-height:28.84px;color:#fff;letter-spacing:-0.024px;transform:scaleX(1.0798);transform-origin:0 0;-webkit-text-stroke:0.7px #fff;">Actions</span>
<span class="t" style="left:932.05px;top:300.69px;font-size:28.84px;line-height:28.84px;color:#fff;letter-spacing:0.649px;transform:scaleX(1.0798);transform-origin:0 0;-webkit-text-stroke:0.7px #fff;">Create</span>
<span class="t" style="left:688.05px;top:405.99px;font-size:28.84px;line-height:28.84px;color:#212529;letter-spacing:0.665px;transform:scaleX(1.0894);transform-origin:0 0;-webkit-text-stroke:0.35px #212529;">Name</span>
<span class="t" style="left:688.93px;top:507.24px;font-size:26.78px;line-height:26.78px;color:#212529;letter-spacing:-0.215px;transform:scaleX(1.0418);transform-origin:0 0;-webkit-text-stroke:0.32px #212529;">ECLSS Astronaut Survival</span>
<span class="t" style="left:688.93px;top:607.24px;font-size:26.78px;line-height:26.78px;color:#212529;letter-spacing:0.156px;transform:scaleX(1.0418);transform-origin:0 0;-webkit-text-stroke:0.32px #212529;">Little Green Men Group</span>
<span class="t" style="left:688.93px;top:707.24px;font-size:26.78px;line-height:26.78px;color:#212529;letter-spacing:0.157px;transform:scaleX(1.0418);transform-origin:0 0;-webkit-text-stroke:0.32px #212529;">Rocket Recovery Systems</span>
<span class="t" style="left:690.93px;top:807.24px;font-size:26.78px;line-height:26.78px;color:#212529;letter-spacing:0.885px;transform:scaleX(1.0418);transform-origin:0 0;-webkit-text-stroke:0.32px #212529;">Terraformation Technologies</span>
<span class="t" style="left:688.93px;top:907.24px;font-size:26.78px;line-height:26.78px;color:#212529;letter-spacing:0.750px;transform:scaleX(1.0418);transform-origin:0 0;-webkit-text-stroke:0.32px #212529;">Martian Robotics Corporation</span>
<span class="t" style="left:689.93px;top:1007.24px;font-size:26.78px;line-height:26.78px;color:#212529;letter-spacing:0.198px;transform:scaleX(1.0418);transform-origin:0 0;-webkit-text-stroke:0.32px #212529;">Space Launch Systems Ltd.</span>
<span class="t" style="left:688.93px;top:1107.24px;font-size:26.78px;line-height:26.78px;color:#212529;letter-spacing:0.229px;transform:scaleX(1.0418);transform-origin:0 0;-webkit-text-stroke:0.32px #212529;">Retro Propulsion Landing Systems</span>
</section>
<section id="sponsor-details" class="a" style="left:0;top:0;width:0;height:0">
<span class="t" style="left:1245.46px;top:302.07px;font-size:38.62px;line-height:38.62px;color:#000;letter-spacing:0.236px;transform:scaleX(1.0409);transform-origin:0 0;-webkit-text-stroke:0.5px #000;">Little Green Men Group</span>
<span class="t" style="left:1265.95px;top:660.88px;font-size:41.2px;line-height:41.2px;color:#212529;letter-spacing:0.467px;transform:scaleX(1.0506);transform-origin:0 0;-webkit-text-stroke:0.49px #212529;">Purchases</span>
<span class="t" style="left:1268.95px;top:788.78px;font-size:41.2px;line-height:41.2px;color:#212529;letter-spacing:-0.072px;transform:scaleX(1.0506);transform-origin:0 0;-webkit-text-stroke:0.49px #212529;">Tickets</span>
<span class="t" style="left:1265.95px;top:904.48px;font-size:41.2px;line-height:41.2px;color:#212529;letter-spacing:1.110px;transform:scaleX(1.0506);transform-origin:0 0;-webkit-text-stroke:0.49px #212529;">Payments</span>
<span class="t" style="left:1265.95px;top:1228.08px;font-size:41.2px;line-height:41.2px;color:#212529;letter-spacing:0.129px;transform:scaleX(1.0506);transform-origin:0 0;-webkit-text-stroke:0.49px #212529;">Refunds</span>
<span class="t" style="left:1265.95px;top:1355.98px;font-size:41.2px;line-height:41.2px;color:#212529;letter-spacing:0.878px;transform:scaleX(1.0506);transform-origin:0 0;-webkit-text-stroke:0.49px #212529;">Promotions</span>
<span class="t" style="left:1303.85px;top:978.49px;font-size:28.84px;line-height:28.84px;color:#212529;letter-spacing:0.354px;transform:scaleX(1.0884);transform-origin:0 0;-webkit-text-stroke:0.35px #212529;">Code</span>
<span class="t" style="left:1533.85px;top:978.49px;font-size:28.84px;line-height:28.84px;color:#212529;letter-spacing:-2.015px;transform:scaleX(1.0884);transform-origin:0 0;-webkit-text-stroke:0.35px #212529;">ID</span>
<span class="t" style="left:1663.05px;top:978.49px;font-size:28.84px;line-height:28.84px;color:#212529;letter-spacing:0.333px;transform:scaleX(1.0884);transform-origin:0 0;-webkit-text-stroke:0.35px #212529;">Amount</span>
<span class="t" style="left:1969.85px;top:978.49px;font-size:28.84px;line-height:28.84px;color:#212529;letter-spacing:0.566px;transform:scaleX(1.0884);transform-origin:0 0;-webkit-text-stroke:0.35px #212529;">Method</span>
<span class="t" style="left:2267.45px;top:978.49px;font-size:28.84px;line-height:28.84px;color:#212529;letter-spacing:0.325px;transform:scaleX(1.0884);transform-origin:0 0;-webkit-text-stroke:0.35px #212529;">Date Created</span>
<span class="t" style="left:1873.25px;top:1113.09px;font-size:28.84px;line-height:28.84px;color:#fff;letter-spacing:0.019px;transform:scaleX(1.0798);transform-origin:0 0;-webkit-text-stroke:0.7px #fff;">Add Payment</span>
</section>

</body></html>
